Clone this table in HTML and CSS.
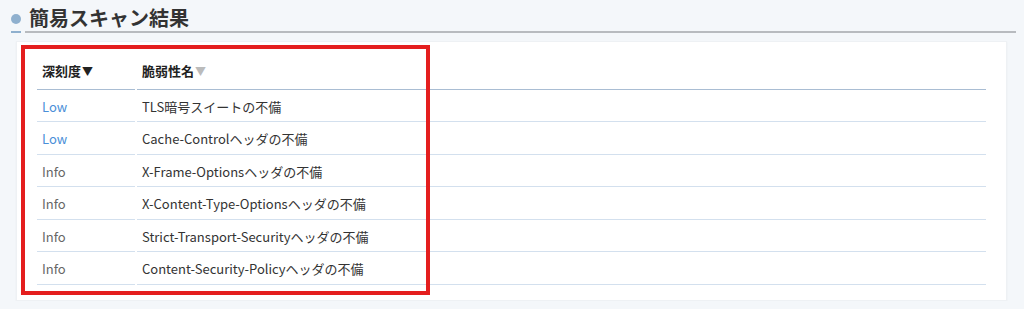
FILE: index.html
```html
<!DOCTYPE html>
<html lang="ja">
<head>
  <meta charset="utf-8">
  <title>簡易スキャン結果</title>
  <meta name="viewport" content="width=device-width, initial-scale=1.0">
  <link rel="stylesheet" href="styles.css">
</head>
<body>

<header class="section-title">
  <h2><span class="dot"></span>簡易スキャン結果</h2>
  <div class="title-rule"><span class="rule-mark"></span><span class="rule-line"></span></div>
</header>

<div class="card">
  <table class="result-table">
    <thead>
      <tr>
        <th class="col-level">深刻度<span class="sort active">▼</span></th>
        <th>脆弱性名<span class="sort">▼</span></th>
      </tr>
    </thead>
    <tbody>
      <tr><td class="low">Low</td><td>TLS暗号スイートの不備</td></tr>
      <tr><td class="low">Low</td><td>Cache-Controlヘッダの不備</td></tr>
      <tr><td class="info">Info</td><td>X-Frame-Optionsヘッダの不備</td></tr>
      <tr><td class="info">Info</td><td>X-Content-Type-Optionsヘッダの不備</td></tr>
      <tr><td class="info">Info</td><td>Strict-Transport-Securityヘッダの不備</td></tr>
      <tr><td class="info">Info</td><td>Content-Security-Policyヘッダの不備</td></tr>
    </tbody>
  </table>

  <!-- highlight frame around the severity / name columns -->
  <div class="highlight"></div>
</div>

</body>
</html>
```

FILE: styles.css
```css
* {
  box-sizing: border-box;
}

body {
  margin: 0;
  background: #f4f7fa;
  font-family: "Noto Sans CJK JP", "Noto Sans", sans-serif;
  color: #333;
}

/* Section heading with the dot and the rule under it */
.section-title {
  padding: 5px 8px 0 11px;
}

.section-title h2 {
  margin: 0;
  display: flex;
  align-items: center;
  font-size: 20px;
  line-height: 26px;
  font-weight: bold;
  color: #333;
}

.dot {
  width: 10px;
  height: 10px;
  border-radius: 50%;
  background: #8fb0ce;
  margin-right: 8px;
  margin-top: 1px;
}

.title-rule {
  display: flex;
  align-items: flex-end;
  height: 2px;
}

.rule-mark {
  width: 10px;
  height: 2px;
  background: #8fb0ce;
}

.rule-line {
  flex: 1;
  height: 2px;
  margin-left: 4px;
  background: #b8bbbf;
}

/* White card holding the table */
.card {
  position: relative;
  margin: 8px 17px 0 16px;
  padding: 10px 18px 13px;
  background: #fff;
  border: 1px solid #eef1f4;
  box-shadow: 0 1px 2px rgba(0, 0, 0, 0.04);
}

.result-table {
  width: 100%;
  border-spacing: 2px;
  font-size: 13px;
}

.result-table th {
  text-align: left;
  font-weight: bold;
  color: #222;
  padding: 7px 5px 7px;
  line-height: 19.5px;
  border-bottom: 1px solid #a9bdd3;
}

.result-table td {
  padding: 5px 5px;
  line-height: 19.5px;
  border-bottom: 1px solid #d3e0ee;
}

.col-level {
  width: 98px;
}

.sort {
  font-size: 11px;
  margin-left: 1px;
  color: #bbb;
}

.sort.active {
  color: #222;
}

.low {
  color: #4a8fd8;
}

.info {
  color: #666;
}

.highlight {
  position: absolute;
  left: 4px;
  top: 3px;
  width: 409px;
  height: 250px;
  border: 4px solid #e41e1e;
  pointer-events: none;
}
```
